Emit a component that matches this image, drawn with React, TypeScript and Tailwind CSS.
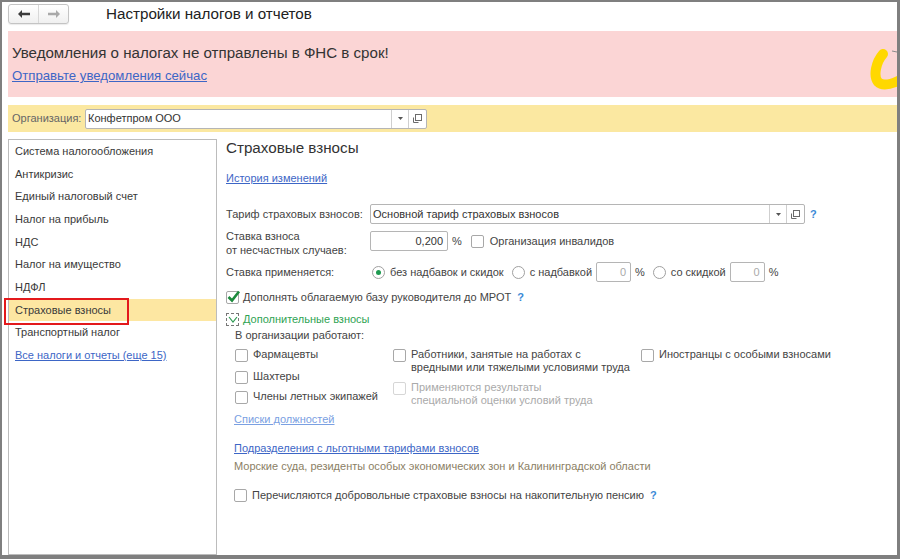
import type { ReactNode } from "react";

const menu = [
  "Система налогообложения",
  "Антикризис",
  "Единый налоговый счет",
  "Налог на прибыль",
  "НДС",
  "Налог на имущество",
  "НДФЛ",
  "Страховые взносы",
  "Транспортный налог",
];

function Box({ disabled }: { disabled?: boolean }) {
  return (
    <span
      className={
        "block h-[13px] w-[13px] shrink-0 rounded-[2px] border bg-white " +
        (disabled ? "border-[#d6d6d6]" : "border-[#a8a8a8]")
      }
    />
  );
}

function Radio({ on }: { on?: boolean }) {
  return (
    <span className="flex h-[13px] w-[13px] shrink-0 items-center justify-center rounded-full border border-[#a0a0a0] bg-white">
      {on && <span className="h-[5px] w-[5px] rounded-full bg-[#1e9a50]" />}
    </span>
  );
}

function Help({ className = "" }: { className?: string }) {
  return <span className={"font-bold text-[#3b8ad6] " + className}>?</span>;
}

function OpenIcon() {
  return (
    <svg width="11" height="11" viewBox="0 0 11 11">
      <rect x="3.5" y="1.5" width="6" height="6" fill="white" stroke="#6b6b6b" />
      <path d="M1.5 4.5v5h5" fill="none" stroke="#6b6b6b" />
    </svg>
  );
}

function DropIcon() {
  return (
    <svg width="7" height="5" viewBox="0 0 7 5">
      <path d="M1 1h5L3.5 4z" fill="#555" />
    </svg>
  );
}

function Field({
  w,
  children,
  pick,
}: {
  w: string;
  children?: ReactNode;
  pick?: boolean;
}) {
  return (
    <div
      className={
        "flex h-[20px] shrink-0 items-stretch rounded-[2px] border border-[#b5b5b5] bg-white text-[#333] " + w
      }
    >
      <div className="flex flex-1 items-center overflow-hidden whitespace-nowrap px-[2px]">{children}</div>
      {pick && (
        <>
          <div className="flex w-[17px] items-center justify-center border-l border-[#cfcfcf]">
            <DropIcon />
          </div>
          <div className="flex w-[18px] items-center justify-center border-l border-[#cfcfcf]">
            <OpenIcon />
          </div>
        </>
      )}
    </div>
  );
}

function Check({ label, disabled, lines }: { label?: string; disabled?: boolean; lines?: string[] }) {
  return (
    <div className="flex items-start gap-[5px]">
      <span className="mt-[1px] flex">
        <Box disabled={disabled} />
      </span>
      <div className={"whitespace-nowrap leading-[13px] " + (disabled ? "text-[#aaaaaa]" : "text-[#444]")}>
        {lines ? lines.map((l) => <div key={l}>{l}</div>) : label}
      </div>
    </div>
  );
}

export default function App() {
  return (
    <div className="flex h-[559px] w-[900px] flex-col overflow-hidden border-t-2 border-r-[3px] border-b-4 border-l-2 border-[#7f7f7f] bg-white font-['Liberation_Sans',Arial,sans-serif] text-[11px] text-[#444]">
      {/* header */}
      <div className="flex h-[29px] shrink-0 items-start pt-[2px]">
        <div className="ml-[6px] flex h-[20px] w-[61px] overflow-hidden rounded-[3px] border border-[#c4c4c4] bg-gradient-to-b from-white to-[#f0f0f0] shadow-[0_1px_1px_rgba(0,0,0,0.08)]">
          <div className="flex flex-1 items-center justify-center border-r border-[#d8d8d8]">
            <svg width="14" height="10" viewBox="0 0 14 10">
              <path d="M5 1 1 5l4 4V6.3h8V3.7H5z" fill="#3c3c3c" />
            </svg>
          </div>
          <div className="flex flex-1 items-center justify-center">
            <svg width="14" height="10" viewBox="0 0 14 10">
              <path d="M9 1l4 4-4 4V6.3H1V3.7h8z" fill="#a9a9a9" />
            </svg>
          </div>
        </div>
        <div className="ml-[37px] text-[15.2px] leading-[20px] text-[#222]">Настройки налогов и отчетов</div>
      </div>

      {/* banner */}
      <div className="relative ml-[6px] h-[66px] shrink-0 overflow-hidden bg-[#fbd5d5] pl-[4px] pt-[12px]">
        <div className="text-[15.1px] leading-[20px] text-[#333]">
          Уведомления о налогах не отправлены в ФНС в срок!
        </div>
        <div className="mt-[5px] text-[13.2px] leading-[16px] text-[#3d66c6] underline">
          Отправьте уведомления сейчас
        </div>
        <svg className="absolute right-0 top-[17px]" width="28" height="42" viewBox="0 0 28 42">
          <path d="M14 6C7 14 4 28 9 34c4 4 11 3 20-1" fill="none" stroke="#ffd800" strokeWidth="10" strokeLinecap="round" />
          <path d="M23 3l5 1" stroke="#8a8a8a" strokeWidth="1" />
        </svg>
      </div>

      {/* organisation */}
      <div className="ml-[6px] mt-[8px] flex h-[27px] shrink-0 items-center bg-[#fbe8a1] pl-[4px]">
        <span className="w-[73px] whitespace-nowrap text-[#666]">Организация:</span>
        <Field w="w-[342px]" pick>
          Конфетпром ООО
        </Field>
      </div>

      {/* main */}
      <div className="mt-[7px] flex min-h-0 flex-1">
        <div className="relative ml-[6px] w-[209px] shrink-0 border border-[#bcbcbc]">
          {menu.map((m) => (
            <div
              key={m}
              className={
                "flex h-[22.67px] items-center pl-[6px] text-[#3a3a3a] " +
                (m === "Страховые взносы" ? "bg-[#fde7a2]" : "")
              }
            >
              {m}
            </div>
          ))}
          <div className="flex h-[22.67px] items-center pl-[6px] text-[#3d66c6] underline">
            Все налоги и отчеты (еще 15)
          </div>
          <div className="absolute left-[-5px] top-[158px] h-[27px] w-[125px] border-2 border-[#e3191c]" />
        </div>

        <div className="ml-[9px] flex flex-1 flex-col whitespace-nowrap">
          <div className="text-[15.2px] leading-[18px] text-[#333]">Страховые взносы</div>
          <div className="mt-[13px] leading-[16px] text-[#3d66c6] underline">История изменений</div>

          <div className="mt-[18px] flex items-center">
            <span className="w-[144px]">Тариф страховых взносов:</span>
            <Field w="w-[435px]" pick>
              Основной тариф страховых взносов
            </Field>
            <Help className="ml-[5px]" />
          </div>

          <div className="mt-[5px] flex h-[28px] items-start">
            <div className="w-[144px] leading-[14px]">
              <div>Ставка взноса</div>
              <div>от несчастных случаев:</div>
            </div>
            <div className="mt-[2px] flex items-center">
              <Field w="w-[78px]">
                <span className="w-full pr-[2px] text-right">0,200</span>
              </Field>
              <span className="ml-[4px]">%</span>
              <span className="ml-[9px]">
                <Box />
              </span>
              <span className="ml-[6px]">Организация инвалидов</span>
            </div>
          </div>

          <div className="mt-[5px] flex h-[20px] items-center">
            <span className="w-[146px]">Ставка применяется:</span>
            <Radio on />
            <span className="ml-[5px]">без надбавок и скидок</span>
            <span className="ml-[8px]">
              <Radio />
            </span>
            <span className="ml-[5px]">с надбавкой</span>
            <span className="ml-[4px]">
              <Field w="w-[35px]">
                <span className="w-full pr-[2px] text-right text-[#aaa]">0</span>
              </Field>
            </span>
            <span className="ml-[4px]">%</span>
            <span className="ml-[8px]">
              <Radio />
            </span>
            <span className="ml-[5px]">со скидкой</span>
            <span className="ml-[4px]">
              <Field w="w-[35px]">
                <span className="w-full pr-[2px] text-right text-[#aaa]">0</span>
              </Field>
            </span>
            <span className="ml-[4px]">%</span>
          </div>

          <div className="mt-[8px] flex h-[14px] items-center">
            <span className="relative h-[13px] w-[13px] rounded-[2px] border border-[#a8a8a8] bg-white">
              <svg className="absolute -left-[1px] -top-[3px]" width="15" height="15" viewBox="0 0 15 15">
                <path d="M2.5 8l3.5 3.5L13 2.5" fill="none" stroke="#1c8a3c" strokeWidth="2.6" />
              </svg>
            </span>
            <span className="ml-[4px]">Дополнять облагаемую базу руководителя до МРОТ</span>
            <Help className="ml-[6px]" />
          </div>

          <div className="mt-[8px] flex h-[14px] items-center">
            <span className="relative h-[13px] w-[13px] border border-dashed border-[#777] bg-white">
              <svg className="absolute left-[1px] top-[1px]" width="10" height="9" viewBox="0 0 10 9">
                <path d="M1 2l4 5 4-5" fill="none" stroke="#2a9a50" strokeWidth="1.2" />
              </svg>
            </span>
            <span className="ml-[4px] text-[#2ea353]">Дополнительные взносы</span>
          </div>

          <div className="ml-[9px] mt-[2px] flex flex-col">
            <div className="leading-[14px]">В организации работают:</div>
            <div className="mt-[6px] flex">
              <div className="flex w-[158px] flex-col">
                <Check label="Фармацевты" />
                <div className="mt-[8px]">
                  <Check label="Шахтеры" />
                </div>
                <div className="mt-[6px]">
                  <Check label="Члены летных экипажей" />
                </div>
              </div>
              <div className="flex w-[248px] flex-col">
                <Check lines={["Работники, занятые на работах с", "вредными или тяжелыми условиями труда"]} />
                <div className="mt-[7px]">
                  <Check disabled lines={["Применяются результаты", "специальной оценки условий труда"]} />
                </div>
              </div>
              <Check label="Иностранцы с особыми взносами" />
            </div>
            <div className="ml-[-1px] mt-[5px] leading-[14px] text-[#7aa0e2] underline">Списки должностей</div>
            <div className="ml-[-1px] mt-[15px] leading-[14px] text-[#3d66c6] underline">
              Подразделения с льготными тарифами взносов
            </div>
            <div className="ml-[-1px] mt-[4px] leading-[14px] text-[#8b8065]">
              Морские суда, резиденты особых экономических зон и Калининградской области
            </div>
            <div className="ml-[-1px] mt-[14px] flex items-center">
              <Box />
              <span className="ml-[5px]">Перечисляются добровольные страховые взносы на накопительную пенсию</span>
              <Help className="ml-[6px]" />
            </div>
          </div>
        </div>
      </div>
    </div>
  );
}
